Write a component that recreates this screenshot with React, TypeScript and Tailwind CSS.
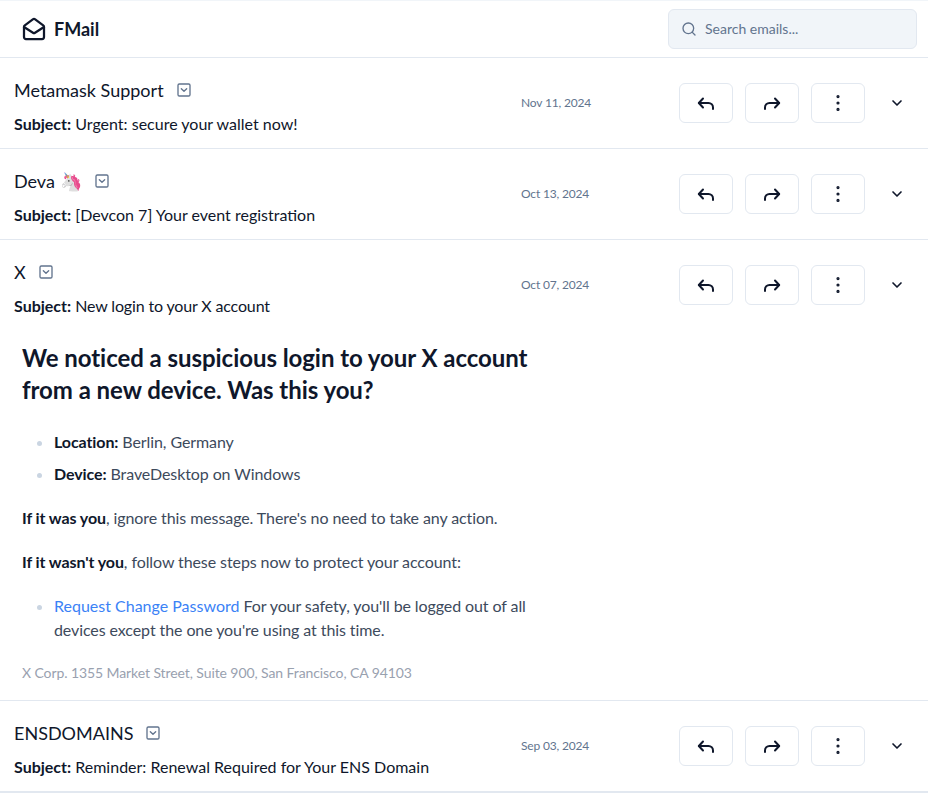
import React from 'react';
import { ChevronDown, EllipsisVertical, MailOpen, Search, SquareChevronDown } from 'lucide-react';

interface Email {
  sender: React.ReactNode;
  subject: string;
  date: string;
  tight?: boolean;
  body?: React.ReactNode;
}

function ActionButton({ children }: { children: React.ReactNode }) {
  return (
    <button className="w-[54px] h-10 flex items-center justify-center bg-white border border-slate-200 rounded-md text-slate-900">
      {children}
    </button>
  );
}

// same arrow for reply and forward, forward is just flipped
function ReplyArrow({ flip }: { flip?: boolean }) {
  return (
    <svg
      width="24"
      height="24"
      viewBox="0 0 24 24"
      fill="none"
      stroke="currentColor"
      strokeWidth="2"
      strokeLinecap="round"
      strokeLinejoin="round"
      className={flip ? '-scale-x-100' : ''}
    >
      <path d="M9 7.5 4.8 12 9 16.5" />
      <path d="M5 12h9.5a4.5 4.5 0 0 1 4.5 4.5V18" />
    </svg>
  );
}

function SuspiciousLogin() {
  return (
    <div className="pl-[22px] pt-[12px] pb-[15px] w-[540px] text-[#3d4a5c] text-base leading-6 tracking-[-0.09px]">
      <h2 className="text-2xl leading-8 font-bold text-slate-900 tracking-[-0.05px]">
        We noticed a suspicious login to your X account from a new device. Was this you?
      </h2>
      <ul className="mt-[20px] pl-8 list-disc marker:text-slate-300">
        <li className="py-1"><b className="text-slate-900">Location:</b> Berlin, Germany</li>
        <li className="py-1"><b className="text-slate-900">Device:</b> BraveDesktop on Windows</li>
      </ul>
      <p className="mt-[16px]"><b className="text-slate-900">If it was you</b>, ignore this message. There's no need to take any action.</p>
      <p className="mt-[20px]"><b className="text-slate-900">If it wasn't you</b>, follow these steps now to protect your account:</p>
      <ul className="mt-[20px] pl-8 list-disc marker:text-slate-300">
        <li><a className="text-[#3b82f6] tracking-normal">Request Change Password</a> For your safety, you'll be logged out of all devices except the one you're using at this time.</li>
      </ul>
      <p className="mt-[19px] text-sm leading-6 text-gray-400">X Corp. 1355 Market Street, Suite 900, San Francisco, CA 94103</p>
    </div>
  );
}

const emails: Email[] = [
  { sender: 'Metamask Support', subject: 'Urgent: secure your wallet now!', date: 'Nov 11, 2024' },
  { sender: 'Deva 🦄', subject: '[Devcon 7] Your event registration', date: 'Oct 13, 2024' },
  { sender: 'X', subject: 'New login to your X account', date: 'Oct 07, 2024', tight: true, body: <SuspiciousLogin /> },
  { sender: 'ENSDOMAINS', subject: 'Reminder: Renewal Required for Your ENS Domain', date: 'Sep 03, 2024' },
];

function EmailRow({ email }: { email: Email }) {
  return (
    <div className="border-b last:border-b-2 border-slate-200">
      <div className="flex items-center h-[90px] pl-[14px]">
        <div className="w-[507px] self-start pt-[18px]">
          <div className="flex items-center gap-3 text-lg leading-7 text-slate-900">
            <span>{email.sender}</span>
            <SquareChevronDown size={16} className="text-slate-500" />
          </div>
          <p className="mt-2 text-base leading-6 text-slate-900">
            <b>Subject:</b> <span className={email.tight ? 'tracking-[-0.15px]' : ''}>{email.subject}</span>
          </p>
        </div>
        <span className="w-[158px] text-xs text-slate-500 tracking-[-0.17px]">{email.date}</span>
        <div className="flex gap-3">
          <ActionButton><ReplyArrow /></ActionButton>
          <ActionButton><ReplyArrow flip /></ActionButton>
          <ActionButton><EllipsisVertical size={22} strokeWidth={1.5} /></ActionButton>
        </div>
        <ChevronDown size={16} strokeWidth={2.5} className="ml-6 text-slate-900" />
      </div>
      {email.body}
    </div>
  );
}

export default function App() {
  return (
    <div className="min-h-screen bg-white font-['Lato',sans-serif]">
      <header className="h-[58px] border-y border-slate-200 border-t-slate-100 flex items-center justify-between pl-[22px] pr-[11px]">
        <div className="flex items-center gap-2">
          <MailOpen size={24} strokeWidth={2.25} className="text-slate-900" />
          <h1 className="text-lg font-bold text-slate-900">FMail</h1>
        </div>
        <div className="w-[249px] h-10 flex items-center gap-2 pl-3 bg-slate-100 border border-slate-200 rounded-md">
          <Search size={16} className="text-slate-500" />
          <span className="text-sm text-slate-500">Search emails...</span>
        </div>
      </header>
      {emails.map((email, i) => (
        <EmailRow key={i} email={email} />
      ))}
    </div>
  );
}
